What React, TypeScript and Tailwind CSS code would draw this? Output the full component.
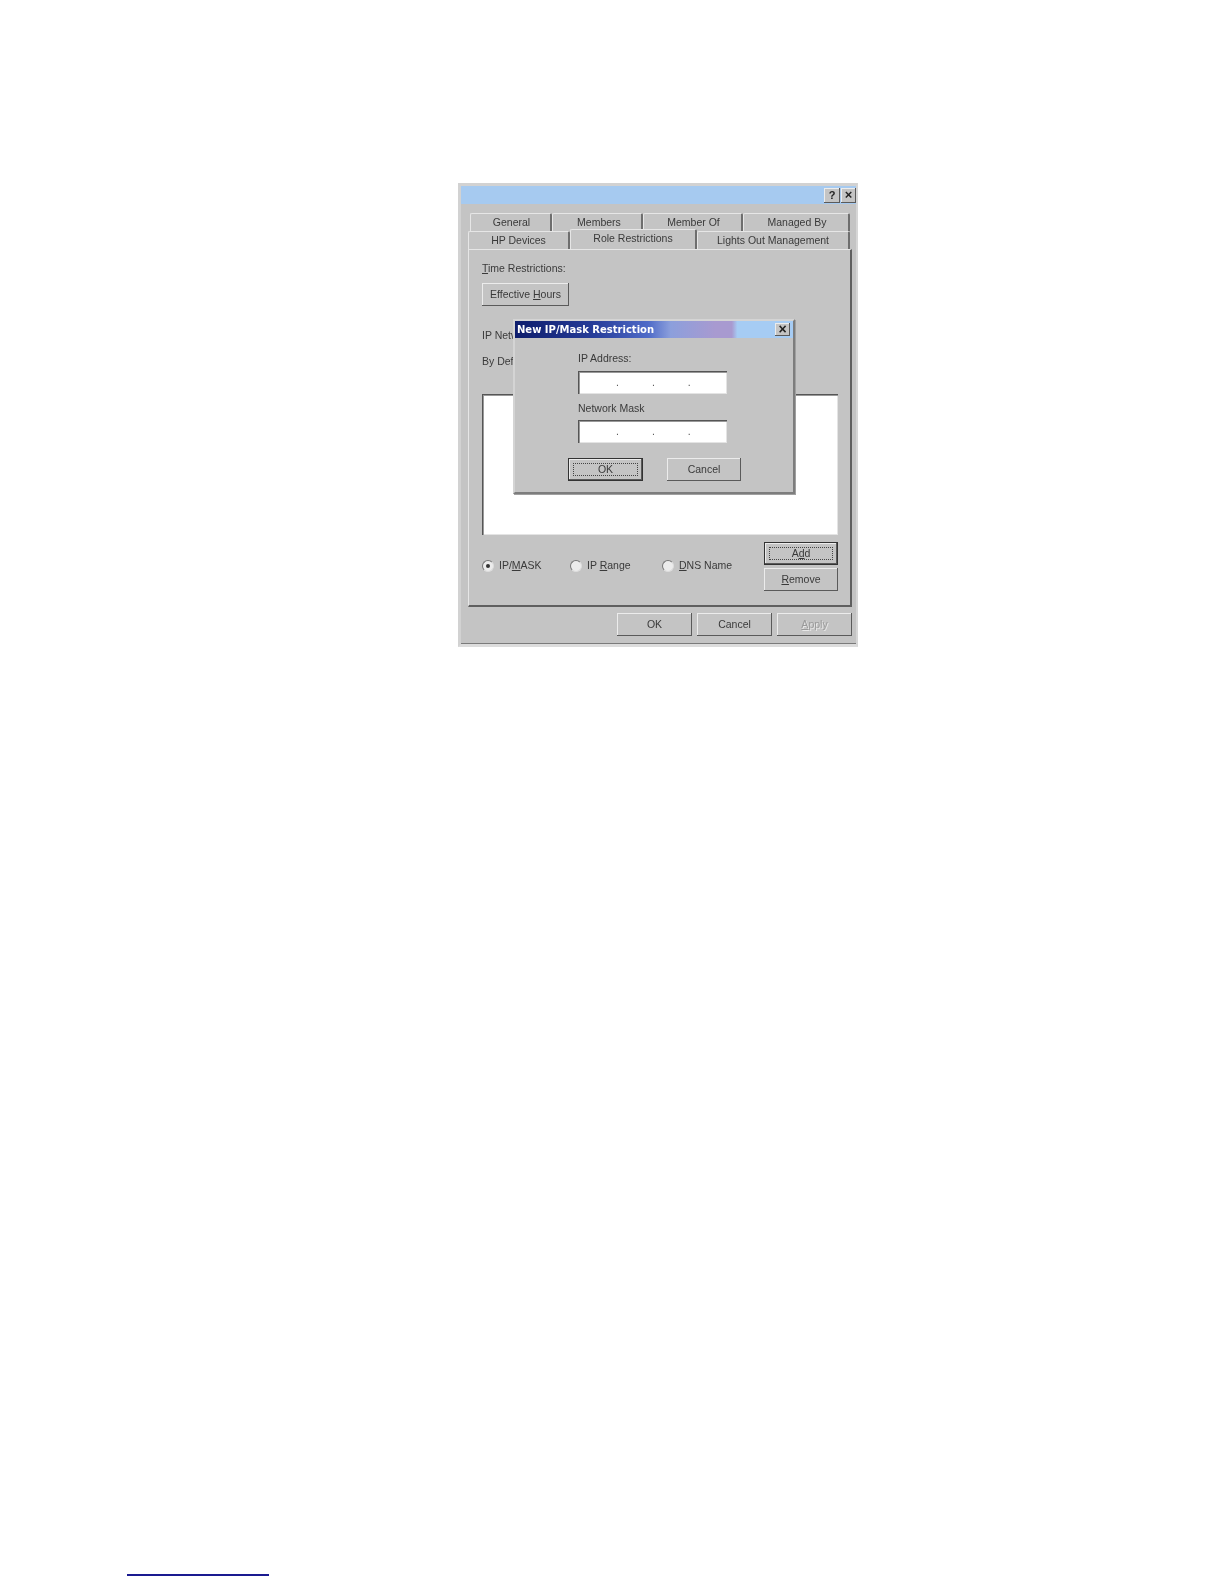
const bevel = "bg-[#c4c4c4] shadow-[inset_-1px_-1px_0_#5a5a5a,inset_1px_1px_0_#ececec]";
const sunken = "shadow-[inset_1px_1px_0_#555,inset_2px_2px_0_#999,inset_-1px_-1px_0_#e4e4e4]";

function Btn({ className = "", children, focus = false }: { className?: string; children: React.ReactNode; focus?: boolean }) {
  return (
    <div className={`flex items-center justify-center text-[10.5px] ${bevel} ${focus ? "border border-[#333]" : ""} ${className}`}>
      {focus ? (
        <span className="flex items-center justify-center w-[calc(100%-8px)] h-[calc(100%-8px)] border border-dotted border-[#444]"><span>{children}</span></span>
      ) : (
        <span>{children}</span>
      )}
    </div>
  );
}

function Tab({ className = "", children }: { className?: string; children: React.ReactNode }) {
  return (
    <div className={`flex items-center justify-center text-[10.5px] border-t border-l border-[#e6e6e6] border-r-2 border-r-[#6e6e6e] rounded-t-[2px] ${className}`}>
      {children}
    </div>
  );
}

function Radio({ on = false }: { on?: boolean }) {
  return (
    <span className="w-[12px] h-[12px] shrink-0 rounded-full bg-[#ececec] border border-[#777] border-r-[#ddd] border-b-[#ddd] flex items-center justify-center">
      {on && <span className="w-[4px] h-[4px] rounded-full bg-[#333]" />}
    </span>
  );
}

function IpInput({ className = "" }: { className?: string }) {
  return (
    <div className={`w-[149px] h-[23px] bg-white ${sunken} flex items-center text-[#555] text-[10.5px] pl-[38px] gap-[33px] ${className}`}>
      <span>.</span>
      <span>.</span>
      <span>.</span>
    </div>
  );
}

export default function App() {
  return (
    <div className="w-[1224px] h-[1584px] bg-white flex flex-col font-['Liberation_Sans',Arial,sans-serif] text-[#3a3a3a]">
      {/* property sheet */}
      <div className="ml-[458px] mt-[183px] w-[400px] h-[464px] bg-[#c4c4c4] border-[3px] border-r-2 border-[#d2d2d2] border-r-[#d6d6d6] border-b-[#dcdcdc] shadow-[inset_0_-1px_0_#7a7a7a] flex flex-col blur-[0.5px]">
        <div className="h-[18px] bg-[#a6caf0] flex items-center justify-end gap-[1px] shrink-0">
          <div className={`w-[16px] h-[15px] ${bevel} flex items-center justify-center text-[11px] font-bold text-[#222]`}>?</div>
          <div className={`w-[15px] h-[15px] ${bevel} flex items-center justify-center text-[13px] font-bold text-[#222]`}>×</div>
        </div>

        <div className="ml-[9px] mt-[9px] flex h-[18px] shrink-0">
          <Tab className="w-[82px] pl-[2px]">General</Tab>
          <Tab className="w-[91px] pl-[4px]">Members</Tab>
          <Tab className="w-[100px] pl-[2px]">Member Of</Tab>
          <Tab className="w-[107px] pl-[2px]">Managed By</Tab>
        </div>
        <div className="ml-[7px] flex h-[18px] shrink-0 relative z-10">
          <Tab className="w-[102px]">HP Devices</Tab>
          <Tab className="w-[127px] h-[20px] -mt-[2px] bg-[#c4c4c4] pb-[1px]">Role Restrictions</Tab>
          <Tab className="w-[153px]">Lights Out Management</Tab>
        </div>

        <div className="ml-[7px] w-[384px] h-[358px] border-l border-t border-[#e6e6e6] border-r-2 border-r-[#5f5f5f] border-b-2 border-b-[#5f5f5f] relative flex flex-col pl-[13px] shrink-0">
          <div className="mt-[11px] text-[10.5px] leading-[14px]"><u>T</u>ime Restrictions:</div>
          <Btn className="mt-[8px] w-[87px] h-[23px]">Effective <u>H</u>ours</Btn>
          <div className="mt-[22px] text-[10.5px] leading-[14px]">IP Network Restrictions:</div>
          <div className="mt-[12px] text-[10.5px] leading-[14px]">By Default:</div>
          <div className={`mt-[26px] w-[356px] h-[141px] bg-white ${sunken} shrink-0`} />
          <div className="mt-[7px] flex w-[356px] justify-between items-start">
            <div className="flex items-center text-[10.5px] h-[14px] mt-[17px]">
              <Radio on />
              <span className="ml-[5px] w-[71px]">IP/<u>M</u>ASK</span>
              <Radio />
              <span className="ml-[5px] w-[75px]">IP <u>R</u>ange</span>
              <Radio />
              <span className="ml-[5px]"><u>D</u>NS Name</span>
            </div>
            <div className="flex flex-col gap-[3px]">
              <Btn focus className="w-[74px] h-[23px]">A<u>d</u>d</Btn>
              <Btn className="w-[74px] h-[23px]"><u>R</u>emove</Btn>
            </div>
          </div>

          {/* modal */}
          <div className="absolute left-[44px] top-[69px] w-[282px] h-[175px] bg-[#c4c4c4] border-2 border-[#d4d4d4] border-r-[#7d7d7d] border-b-[#7d7d7d] shadow-[1px_1px_0_#a0a0a0] flex flex-col">
            <div className="h-[17px] bg-[linear-gradient(90deg,#0e1d6c_0%,#263c98_28%,#4f6bc8_48%,#8c9fdc_56%,#a89ad0_72%,#a89ad0_78%,#a6ccf4_80%)] flex items-center justify-between pl-[2px] shrink-0">
              <span className="font-['DejaVu_Sans',sans-serif] font-bold text-[10px] text-white whitespace-nowrap">New IP/Mask Restriction</span>
              <div className={`w-[15px] h-[13px] mr-[3px] ${bevel} flex items-center justify-center text-[14px] font-bold text-[#222]`}>×</div>
            </div>
            <div className="pl-[63px] flex flex-col">
              <div className="mt-[13px] text-[10.5px] leading-[14px]">IP Address:</div>
              <IpInput className="mt-[6px]" />
              <div className="mt-[7px] text-[10.5px] leading-[14px]">Network Mask</div>
              <IpInput className="mt-[5px]" />
            </div>
            <div className="mt-[15px] ml-[53px] flex gap-[24px]">
              <Btn focus className="w-[75px] h-[23px]">OK</Btn>
              <Btn className="w-[74px] h-[23px]">Cancel</Btn>
            </div>
          </div>
        </div>

        <div className="ml-[156px] mt-[6px] flex gap-[5px]">
          <Btn className="w-[75px] h-[23px]">OK</Btn>
          <Btn className="w-[75px] h-[23px]">Cancel</Btn>
          <Btn className="w-[75px] h-[23px] text-[#9a9a9a] [text-shadow:1px_1px_0_#e8e8e8]"><u>A</u>pply</Btn>
        </div>
      </div>

      {/* footnote rule */}
      <div className="ml-[127px] mt-[927px] w-[142px] h-[2px] bg-[#1a1a90]" />
    </div>
  );
}
